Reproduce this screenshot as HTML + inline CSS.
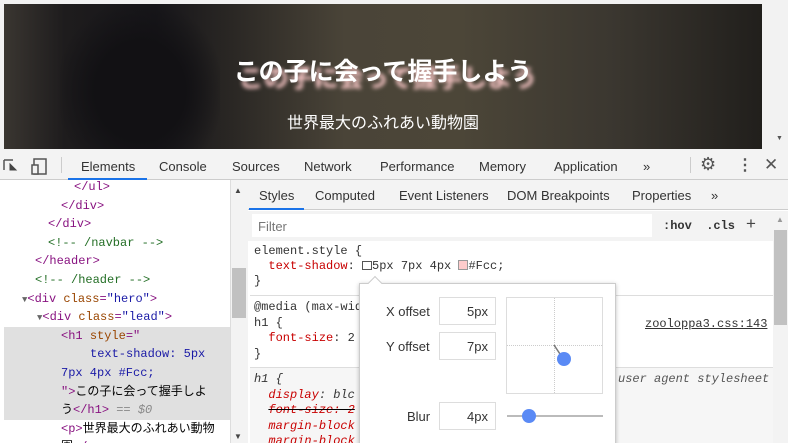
<!DOCTYPE html>
<html style="height:443px;overflow:hidden"><head><meta charset="utf-8"><style>
*{margin:0;padding:0;box-sizing:border-box}
body{width:788px;height:443px;overflow:hidden;background:#fff;font-family:"Liberation Sans","Noto Sans CJK JP",sans-serif;position:relative}
.a{position:absolute;white-space:nowrap}
.m{font-family:"Liberation Mono","Noto Sans CJK JP",monospace;font-size:12px}
.tag{color:#881280}.attr{color:#994500}.val{color:#1a1aa6}.cm{color:#236e25}
.prop{color:#c80000}
.el div{height:18.6px;line-height:18.6px;overflow:hidden}
.el div.hl{height:93px;overflow:visible}
</style></head><body>
<!-- hero -->
<div class="a" style="left:0;top:0;width:788px;height:150px;background:#f2f2f2"></div>
<div class="a" style="left:4px;top:4px;width:758px;height:145px;background:linear-gradient(90deg,#3a3631 0%,#1e1c1d 8%,#17161a 20%,#2a2724 30%,#4a4438 45%,#4c4638 60%,#3b3730 80%,#211f1c 100%)"></div>
<div class="a" style="left:60px;top:4px;width:160px;height:145px;background:radial-gradient(ellipse at 50% 60%,#121114 40%,rgba(20,20,20,0) 75%)"></div>
<div class="a" style="left:0;top:52px;width:766px;text-align:center;color:#fff;font-size:25px;font-weight:bold;text-shadow:5px 7px 4px #fcc">この子に会って握手しよう</div>
<div class="a" style="left:0;top:109px;width:766px;text-align:center;color:#fff;font-size:16px">世界最大のふれあい動物園</div>
<div class="a" style="left:776px;top:135px;font-size:7px;color:#555">▼</div>
<!-- toolbar -->
<div class="a" style="left:0;top:150px;width:788px;height:30px;background:#f3f3f3;border-bottom:1px solid #ccc"></div>
<svg class="a" style="left:2px;top:156px" width="50" height="20"><path d="M2 4h9M2 4v10" stroke="#555" stroke-width="1.5" fill="none"/><path d="M8 8l6 6M8 8v6h6z" stroke="#444" fill="#444"/><rect x="32" y="3" width="12" height="15" fill="none" stroke="#555" stroke-width="1.5"/><rect x="30" y="9" width="6" height="9" fill="#f3f3f3" stroke="#555" stroke-width="1.5"/></svg>
<div class="a" style="left:61px;top:157px;width:1px;height:16px;background:#ccc"></div>
<div class="a" style="left:0;top:159px;font-size:13px;color:#333">
<span class="a" style="left:81px">Elements</span><span class="a" style="left:159px">Console</span><span class="a" style="left:232px">Sources</span><span class="a" style="left:304px">Network</span><span class="a" style="left:380px">Performance</span><span class="a" style="left:479px">Memory</span><span class="a" style="left:554px">Application</span><span class="a" style="left:643px">»</span></div>
<div class="a" style="left:68px;top:178px;width:79px;height:2px;background:#1a73e8"></div>
<div class="a" style="left:690px;top:157px;width:1px;height:16px;background:#ccc"></div>
<div class="a" style="left:700px;top:154px;font-size:18px;color:#555">⚙</div>
<div class="a" style="left:737px;top:155px;font-size:16px;color:#555;font-weight:bold">⋮</div>
<div class="a" style="left:764px;top:155px;font-size:17px;color:#555">✕</div>
<!-- elements panel -->
<div class="a" style="left:0;top:180px;width:232px;height:263px;overflow:hidden">
<div class="a m el" style="left:0;top:-2px;width:232px;font-size:12px">
<div style="padding-left:74px"><span class="tag">&lt;/ul&gt;</span></div>
<div style="padding-left:61px"><span class="tag">&lt;/div&gt;</span></div>
<div style="padding-left:48px"><span class="tag">&lt;/div&gt;</span></div>
<div style="padding-left:48px" class="cm">&lt;!-- /navbar --&gt;</div>
<div style="padding-left:35px"><span class="tag">&lt;/header&gt;</span></div>
<div style="padding-left:35px" class="cm">&lt;!-- /header --&gt;</div>
<div style="padding-left:22px"><span style="color:#666;font-size:9px">▼</span><span class="tag">&lt;div </span><span class="attr">class</span><span class="tag">=</span><span class="val">"hero"</span><span class="tag">&gt;</span></div>
<div style="padding-left:37px"><span style="color:#666;font-size:9px">▼</span><span class="tag">&lt;div </span><span class="attr">class</span><span class="tag">=</span><span class="val">"lead"</span><span class="tag">&gt;</span></div>
<div class="hl" style="background:#e0e0e0;margin-left:4px;padding-left:57px">
<div><span class="tag">&lt;h1 </span><span class="attr">style</span><span class="tag">="</span></div>
<div style="padding-left:29px" class="val">text-shadow: 5px</div>
<div class="val">7px 4px #Fcc;</div>
<div><span class="tag">"&gt;</span>この子に会って握手しよ</div>
<div>う<span class="tag">&lt;/h1&gt;</span> <span style="color:#888;font-style:italic">== $0</span></div></div>
<div style="padding-left:61px"><span class="tag">&lt;p&gt;</span>世界最大のふれあい動物</div>
<div style="padding-left:61px">園<span class="tag">&lt;/p&gt;</span></div>
</div></div>
<div class="a" style="left:230px;top:180px;width:18px;height:263px;background:#f3f3f3;border-left:1px solid #ddd"></div>
<div class="a" style="left:232px;top:268px;width:14px;height:50px;background:#c1c1c1"></div>
<div class="a" style="left:234px;top:186px;font-size:8px;color:#444">▲</div>
<div class="a" style="left:234px;top:432px;font-size:8px;color:#444">▼</div>
<!-- styles panel -->
<div class="a" style="left:248px;top:180px;width:540px;height:30px;background:#f3f3f3;border-bottom:1px solid #ccc"></div>
<div class="a" style="left:0;top:188px;font-size:13px;color:#333"><span class="a" style="left:259px">Styles</span><span class="a" style="left:315px">Computed</span><span class="a" style="left:399px">Event Listeners</span><span class="a" style="left:507px">DOM Breakpoints</span><span class="a" style="left:632px">Properties</span><span class="a" style="left:711px">»</span></div>
<div class="a" style="left:249px;top:208px;width:55px;height:2px;background:#1a73e8"></div>
<div class="a" style="left:248px;top:211px;width:525px;height:30px;background:#f3f3f3"></div>
<div class="a" style="left:252px;top:214px;width:400px;height:23px;background:#fff"></div>
<div class="a" style="left:258px;top:219px;font-size:13px;color:#777">Filter</div>
<div class="a m" style="left:663px;top:219px;color:#333;font-weight:bold">:hov&nbsp; .cls</div>
<div class="a" style="left:746px;top:214px;font-size:17px;color:#444">+</div>
<div class="a" style="left:773px;top:211px;width:15px;height:232px;background:#f3f3f3"></div>
<div class="a" style="left:774px;top:230px;width:13px;height:95px;background:#c1c1c1"></div>
<div class="a" style="left:776px;top:215px;font-size:8px;color:#999">▲</div>
<div class="a m" style="left:254px;top:244px;line-height:15px;color:#333">element.style {<br>&nbsp;&nbsp;<span class="prop">text-shadow</span>: <span style="display:inline-block;width:10px;height:9px;border:1px solid #555;vertical-align:-1px"></span>5px 7px 4px <span style="display:inline-block;width:10px;height:10px;background:#fcc;border:1px solid #999;vertical-align:-1px"></span>#Fcc;<br>}</div>
<div class="a" style="left:250px;top:295px;width:523px;height:1px;background:#ddd"></div>
<div class="a m" style="left:254px;top:300px;line-height:15.5px;color:#333">@media (max-wid<br>h1 {<br>&nbsp;&nbsp;<span class="prop">font-size</span>: 2<br>}</div>
<div class="a m" style="left:645px;top:317px;color:#333;text-decoration:underline">zooloppa3.css:143</div>
<div class="a" style="left:250px;top:367px;width:523px;height:76px;background:#f6f6f6;border-top:1px solid #ddd"></div>
<div class="a m" style="left:254px;top:372px;line-height:15.5px;color:#333;font-style:italic">h1 {<br>&nbsp;&nbsp;<span class="prop">display</span>: blc<br>&nbsp;&nbsp;<span class="prop" style="text-decoration:line-through;text-decoration-color:#000">font-size: 2</span><br>&nbsp;&nbsp;<span class="prop">margin-block</span><br>&nbsp;&nbsp;<span class="prop">margin-block</span></div>
<div class="a m" style="left:618px;top:372px;color:#555;font-style:italic">user agent stylesheet</div>
<!-- popup -->
<div class="a" style="left:359px;top:283px;width:257px;height:170px;background:#fff;border:1px solid #ccc;box-shadow:0 1px 4px rgba(0,0,0,.25)"></div>
<div class="a" style="left:370px;top:278px;width:10px;height:10px;background:#fff;border-left:1px solid #ccc;border-top:1px solid #ccc;transform:rotate(45deg)"></div>
<div class="a" style="left:386px;top:304px;font-size:13px;color:#333">X offset</div>
<div class="a" style="left:386px;top:339px;font-size:13px;color:#333">Y offset</div>
<div class="a" style="left:407px;top:409px;font-size:13px;color:#333">Blur</div>
<div class="a" style="left:439px;top:297px;width:57px;height:28px;border:1px solid #ddd;text-align:right;padding:6px 7px;font-size:13px;color:#333">5px</div>
<div class="a" style="left:439px;top:332px;width:57px;height:28px;border:1px solid #ddd;text-align:right;padding:6px 7px;font-size:13px;color:#333">7px</div>
<div class="a" style="left:439px;top:402px;width:57px;height:28px;border:1px solid #ddd;text-align:right;padding:6px 7px;font-size:13px;color:#333">4px</div>
<div class="a" style="left:506px;top:297px;width:97px;height:97px;border:1px solid #ddd"></div>
<div class="a" style="left:554px;top:298px;width:0;height:95px;border-left:1px dotted #ccc"></div>
<div class="a" style="left:507px;top:345px;width:95px;height:0;border-top:1px dotted #ccc"></div>
<svg class="a" style="left:550px;top:341px" width="25" height="25"><line x1="4" y1="4" x2="10" y2="13" stroke="#777" stroke-width="1.5"/><circle cx="14" cy="18" r="7" fill="#5a8af5"/></svg>
<div class="a" style="left:507px;top:415px;width:96px;height:2px;background:#bbb"></div>
<div class="a" style="left:522px;top:409px;width:14px;height:14px;border-radius:50%;background:#5a8af5"></div>
</body></html>
